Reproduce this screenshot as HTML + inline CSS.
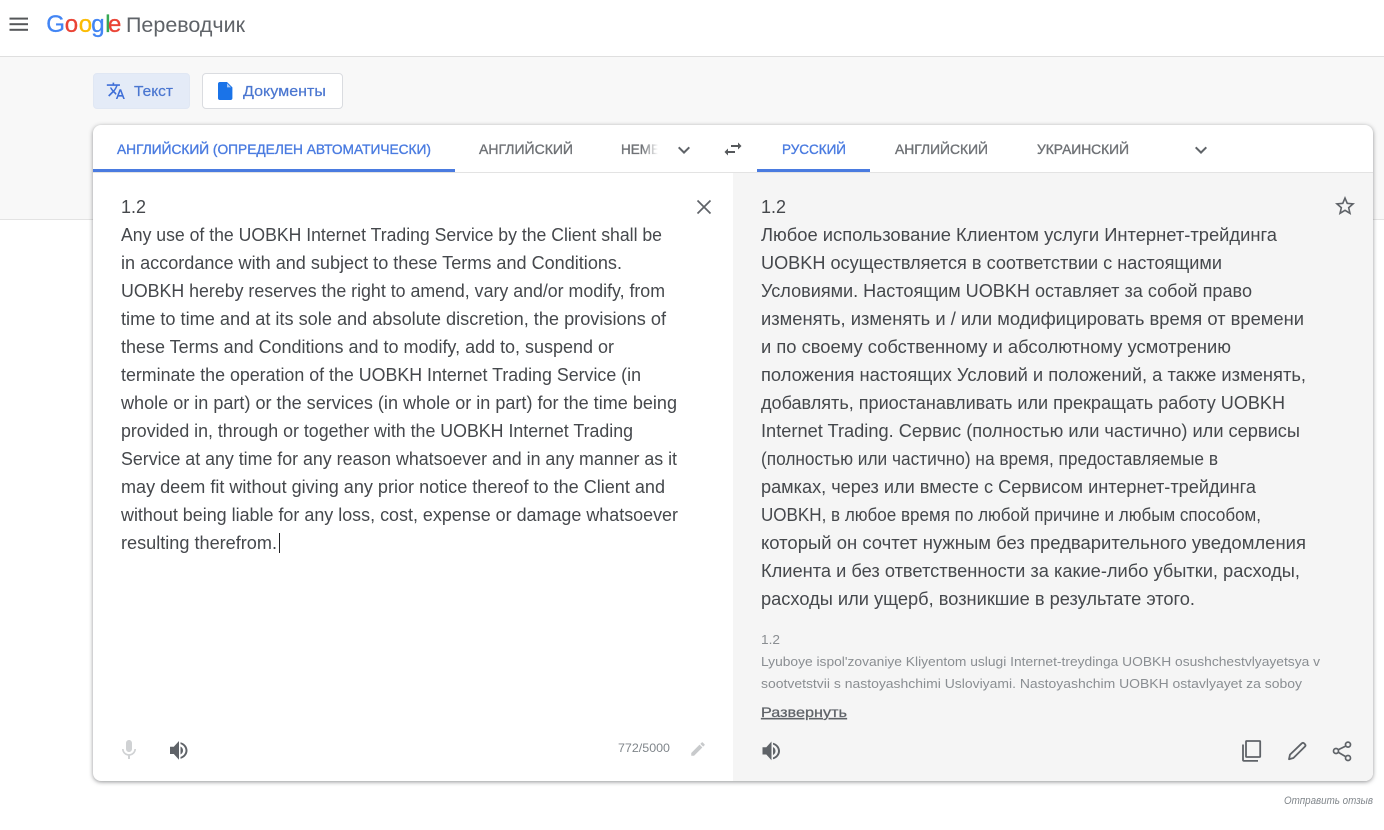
<!DOCTYPE html>
<html lang="ru"><head><meta charset="utf-8"><title>Google Переводчик</title>
<style>
html,body{margin:0;padding:0;width:1384px;height:830px;overflow:hidden;background:#fff}
div{position:absolute;box-sizing:border-box}
svg{position:absolute;left:0;top:0}
text{font-family:"Liberation Sans",sans-serif;white-space:pre}
.t{font-size:18px;fill:#45484c}
.tab{font-size:13.5px;fill:#6f7276;stroke:#6f7276;stroke-width:.35}
.tab.a{fill:#4a7be0;stroke:#4a7be0}
.tr{font-size:12.5px;fill:#8a8e92}
</style></head><body>
<div style="left:0;top:56px;width:1384px;height:164px;background:#f8f8f8;border-top:1px solid #dfdfdf;border-bottom:1px solid #e3e3e3"></div>
<div style="left:93px;top:73px;width:97px;height:36px;background:#e4ebf7;border-radius:4px;border:1px solid #e0e7f3"></div>
<div style="left:202px;top:73px;width:141px;height:36px;background:#fff;border-radius:4px;border:1px solid #dadce0"></div>
<div style="left:93px;top:125px;width:1280px;height:656px;background:#fff;border-radius:8px;box-shadow:0 1px 4px 0 rgba(40,42,45,.5)"></div>
<div style="left:733px;top:173px;width:640px;height:608px;background:#f5f5f5;border-bottom-right-radius:8px"></div>
<div style="left:93px;top:172px;width:1280px;height:1px;background:#e3e3e3"></div>
<div style="left:93px;top:169px;width:362px;height:3px;background:#4a7be0"></div>
<div style="left:757px;top:169px;width:113px;height:3px;background:#4a7be0"></div>
<svg width="1384" height="830" viewBox="0 0 1384 830" xmlns="http://www.w3.org/2000/svg">
<defs><linearGradient id="fade" x1="621" x2="658" y1="0" y2="0" gradientUnits="userSpaceOnUse"><stop offset="0.55" stop-color="#6f7276"/><stop offset="1" stop-color="#6f7276" stop-opacity="0"/></linearGradient></defs>

<!-- header -->
<g fill="#555759"><rect x="9.5" y="17.6" width="18.5" height="2"/><rect x="9.5" y="23.2" width="18.5" height="2"/><rect x="9.5" y="28.8" width="18.5" height="2"/></g>
<text y="32" font-size="24" stroke-width=".3"><tspan x="46.2" fill="#4285f4" stroke="#4285f4">G</tspan><tspan x="64.8" fill="#ea4335" stroke="#ea4335">o</tspan><tspan x="78.7" fill="#fbbc05" stroke="#fbbc05">o</tspan><tspan x="91.2" fill="#4285f4" stroke="#4285f4">g</tspan><tspan x="105.2" fill="#34a853" stroke="#34a853">l</tspan><tspan x="108" fill="#ea4335" stroke="#ea4335">e</tspan></text>
<text x="126" y="32" font-size="21" fill="#5f6368" textLength="119" lengthAdjust="spacingAndGlyphs">Переводчик</text>

<!-- mode buttons -->
<path transform="translate(106,81) scale(.82)" fill="#3f6fd8" d="M12.87 15.07l-2.54-2.51.03-.03c1.74-1.94 2.98-4.17 3.71-6.53H17V4h-7V2H8v2H1v1.99h11.17C11.5 7.92 10.44 9.75 9 11.35 8.07 10.32 7.3 9.19 6.69 8h-2c.73 1.63 1.73 3.17 2.98 4.56l-5.09 5.02L4 19l5-5 3.11 3.11.76-2.04zM18.5 10h-2L12 22h2l1.12-3h4.75L21 22h2l-4.5-12zm-2.62 7l1.62-4.33L19.12 17h-3.24z"/>
<text x="134" y="96" font-size="15" fill="#4a76d0" stroke="#4a76d0" stroke-width=".2" textLength="39" lengthAdjust="spacingAndGlyphs">Текст</text>
<path transform="translate(214.4,80.2) scale(.9)" fill="#1a73e8" d="M6 2c-1.1 0-1.99.9-1.99 2L4 20c0 1.1.89 2 1.99 2H18c1.1 0 2-.9 2-2V8l-6-6H6z"/>
<path transform="translate(214.4,80.2) scale(.9)" fill="#a9c8f5" d="M14 3.5V8h4.5z"/>
<text x="243" y="96" font-size="15" fill="#4a76d0" stroke="#4a76d0" stroke-width=".2" textLength="83" lengthAdjust="spacingAndGlyphs">Документы</text>

<!-- tabs -->
<text class="tab a" x="117" y="154" textLength="314" lengthAdjust="spacingAndGlyphs">АНГЛИЙСКИЙ (ОПРЕДЕЛЕН АВТОМАТИЧЕСКИ)</text>
<text class="tab" x="479" y="154" textLength="94" lengthAdjust="spacingAndGlyphs">АНГЛИЙСКИЙ</text>
<text x="621" y="154" font-size="13.5" fill="url(#fade)" stroke="url(#fade)" stroke-width=".35">НЕМЕ</text>
<path transform="translate(672,138)" fill="#5f6368" d="M16.59 8.59L12 13.17 7.41 8.59 6 10l6 6 6-6z"/>
<path transform="translate(721,137)" fill="#55585b" d="M6.99 11.5L3.5 15l3.49 3.5V16H14v-2H6.99v-2.5zM20.5 9l-3.49-3.5V8H10v2h7.01v2.5L20.5 9z"/>
<text class="tab a" x="782" y="154" textLength="64" lengthAdjust="spacingAndGlyphs">РУССКИЙ</text>
<text class="tab" x="895" y="154" textLength="93" lengthAdjust="spacingAndGlyphs">АНГЛИЙСКИЙ</text>
<text class="tab" x="1037" y="154" textLength="92" lengthAdjust="spacingAndGlyphs">УКРАИНСКИЙ</text>
<path transform="translate(1189,138)" fill="#5f6368" d="M16.59 8.59L12 13.17 7.41 8.59 6 10l6 6 6-6z"/>

<!-- source text -->
<g class="src">
<text class="t" x="121" y="213" textLength="25" lengthAdjust="spacingAndGlyphs">1.2</text>
<text class="t" x="121" y="241" textLength="541" lengthAdjust="spacingAndGlyphs">Any use of the UOBKH Internet Trading Service by the Client shall be</text>
<text class="t" x="121" y="269" textLength="501" lengthAdjust="spacingAndGlyphs">in accordance with and subject to these Terms and Conditions.</text>
<text class="t" x="121" y="297" textLength="544" lengthAdjust="spacingAndGlyphs">UOBKH hereby reserves the right to amend, vary and/or modify, from</text>
<text class="t" x="121" y="325" textLength="545" lengthAdjust="spacingAndGlyphs">time to time and at its sole and absolute discretion, the provisions of</text>
<text class="t" x="121" y="353" textLength="493" lengthAdjust="spacingAndGlyphs">these Terms and Conditions and to modify, add to, suspend or</text>
<text class="t" x="121" y="381" textLength="520" lengthAdjust="spacingAndGlyphs">terminate the operation of the UOBKH Internet Trading Service (in</text>
<text class="t" x="121" y="409" textLength="556" lengthAdjust="spacingAndGlyphs">whole or in part) or the services (in whole or in part) for the time being</text>
<text class="t" x="121" y="437" textLength="512" lengthAdjust="spacingAndGlyphs">provided in, through or together with the UOBKH Internet Trading</text>
<text class="t" x="121" y="465" textLength="556" lengthAdjust="spacingAndGlyphs">Service at any time for any reason whatsoever and in any manner as it</text>
<text class="t" x="121" y="493" textLength="544" lengthAdjust="spacingAndGlyphs">may deem fit without giving any prior notice thereof to the Client and</text>
<text class="t" x="121" y="521" textLength="557" lengthAdjust="spacingAndGlyphs">without being liable for any loss, cost, expense or damage whatsoever</text>
<text class="t" x="121" y="549" textLength="156" lengthAdjust="spacingAndGlyphs">resulting therefrom.</text>
</g>
<rect x="279" y="533" width="1" height="20" fill="#202124"/>
<path d="M697.5 200.5l13 13M710.5 200.5l-13 13" stroke="#5f6368" stroke-width="1.7" fill="none"/>

<!-- target text -->
<text class="t" x="761" y="213" textLength="25" lengthAdjust="spacingAndGlyphs">1.2</text>
<text class="t" x="761" y="241" textLength="516" lengthAdjust="spacingAndGlyphs">Любое использование Клиентом услуги Интернет-трейдинга</text>
<text class="t" x="761" y="269" textLength="461" lengthAdjust="spacingAndGlyphs">UOBKH осуществляется в соответствии с настоящими</text>
<text class="t" x="761" y="297" textLength="491" lengthAdjust="spacingAndGlyphs">Условиями. Настоящим UOBKH оставляет за собой право</text>
<text class="t" x="761" y="325" textLength="543" lengthAdjust="spacingAndGlyphs">изменять, изменять и / или модифицировать время от времени</text>
<text class="t" x="761" y="353" textLength="470" lengthAdjust="spacingAndGlyphs">и по своему собственному и абсолютному усмотрению</text>
<text class="t" x="761" y="381" textLength="545" lengthAdjust="spacingAndGlyphs">положения настоящих Условий и положений, а также изменять,</text>
<text class="t" x="761" y="409" textLength="524" lengthAdjust="spacingAndGlyphs">добавлять, приостанавливать или прекращать работу UOBKH</text>
<text class="t" x="761" y="437" textLength="539" lengthAdjust="spacingAndGlyphs">Internet Trading. Сервис (полностью или частично) или сервисы</text>
<text class="t" x="761" y="465" textLength="457" lengthAdjust="spacingAndGlyphs">(полностью или частично) на время, предоставляемые в</text>
<text class="t" x="761" y="493" textLength="495" lengthAdjust="spacingAndGlyphs">рамках, через или вместе с Сервисом интернет-трейдинга</text>
<text class="t" x="761" y="521" textLength="500" lengthAdjust="spacingAndGlyphs">UOBKH, в любое время по любой причине и любым способом,</text>
<text class="t" x="761" y="549" textLength="545" lengthAdjust="spacingAndGlyphs">который он сочтет нужным без предварительного уведомления</text>
<text class="t" x="761" y="577" textLength="539" lengthAdjust="spacingAndGlyphs">Клиента и без ответственности за какие-либо убытки, расходы,</text>
<text class="t" x="761" y="605" textLength="434" lengthAdjust="spacingAndGlyphs">расходы или ущерб, возникшие в результате этого.</text>
<path transform="translate(1333,194)" fill="#5f6368" d="M22 9.24l-7.19-.62L12 2 9.19 8.63 2 9.24l5.46 4.73L5.82 21 12 17.27 18.18 21l-1.63-7.03L22 9.24zM12 15.4l-3.76 2.27 1-4.28-3.32-2.88 4.38-.38L12 6.1l1.71 4.04 4.38.38-3.32 2.88 1 4.28L12 15.4z"/>

<!-- transliteration -->
<text class="tr" x="761" y="644" textLength="19" lengthAdjust="spacingAndGlyphs">1.2</text>
<text class="tr" x="761" y="666" textLength="559" lengthAdjust="spacingAndGlyphs">Lyuboye ispol'zovaniye Kliyentom uslugi Internet-treydinga UOBKH osushchestvlyayetsya v</text>
<text class="tr" x="761" y="688" textLength="541" lengthAdjust="spacingAndGlyphs">sootvetstvii s nastoyashchimi Usloviyami. Nastoyashchim UOBKH ostavlyayet za soboy</text>
<text x="761" y="717" font-size="14" fill="#5f6368" stroke="#5f6368" stroke-width=".25" text-decoration="underline" textLength="86" lengthAdjust="spacingAndGlyphs">Развернуть</text>

<!-- source bottom icons -->
<path transform="translate(117,738)" fill="#d0d2d4" d="M12 14c1.66 0 2.99-1.34 2.99-3L15 5c0-1.66-1.34-3-3-3S9 3.34 9 5v6c0 1.66 1.34 3 3 3zm5.3-3c0 3-2.54 5.1-5.3 5.1S6.7 14 6.7 11H5c0 3.41 2.72 6.23 6 6.72V21h2v-3.28c3.28-.48 6-3.3 6-6.72h-1.7z"/>
<g transform="translate(170,741)" fill="#5f6368">
<path d="M0 5.8v7.2h3.8l5.2 5.8V0L3.8 5.8z"/>
<path d="M10.5 5.5c1.6.8 2.5 2.3 2.5 4s-.9 3.2-2.5 4z"/>
<path d="M10.5 1.2v1.9c2.9.9 5 3.5 5 6.4s-2.1 5.5-5 6.4v1.9c4-.9 7-4.3 7-8.3s-3-7.4-7-8.3z" />
</g>
<text x="618" y="752" font-size="12" fill="#80868b" textLength="52" lengthAdjust="spacingAndGlyphs">772/5000</text>
<path transform="translate(689,740) scale(.75)" fill="#c8cacc" d="M3 17.25V21h3.75L17.81 9.94l-3.75-3.75L3 17.25zM20.71 7.04c.39-.39.39-1.02 0-1.41l-2.34-2.34c-.39-.39-1.02-.39-1.41 0l-1.83 1.83 3.75 3.75 1.83-1.83z"/>

<!-- target bottom icons -->
<g transform="translate(762.5,741.5)" fill="#5f6368">
<path d="M0 5.8v7.2h3.8l5.2 5.8V0L3.8 5.8z"/>
<path d="M10.5 5.5c1.6.8 2.5 2.3 2.5 4s-.9 3.2-2.5 4z"/>
<path d="M10.5 1.2v1.9c2.9.9 5 3.5 5 6.4s-2.1 5.5-5 6.4v1.9c4-.9 7-4.3 7-8.3s-3-7.4-7-8.3z"/>
</g>
<g fill="none" stroke="#5f6368" stroke-width="1.8">
<rect x="1246" y="741" width="14.2" height="16" rx=".6"/>
<path d="M1243 744.5v15.4a1 1 0 0 0 1 1h14"/>
</g>
<path fill="none" stroke="#5f6368" stroke-width="1.8" stroke-linejoin="round" d="M1289 759.2l1-4.6 11.8-11.3c.7-.6 1.6-.6 2.2 0l1 1c.6.7.6 1.6 0 2.2l-11.6 11.5z"/>
<g fill="none" stroke="#5f6368" stroke-width="1.7">
<circle cx="1348" cy="744.6" r="2.5"/>
<circle cx="1336" cy="751" r="2.5"/>
<circle cx="1348" cy="758" r="2.5"/>
<path d="M1345.9 746l-7.7 3.8M1338.2 752.3l7.7 4.4"/>
</g>

<text x="1284" y="804" font-size="11" font-style="italic" fill="#80868b" textLength="89" lengthAdjust="spacingAndGlyphs">Отправить отзыв</text>
</svg>
</body></html>
